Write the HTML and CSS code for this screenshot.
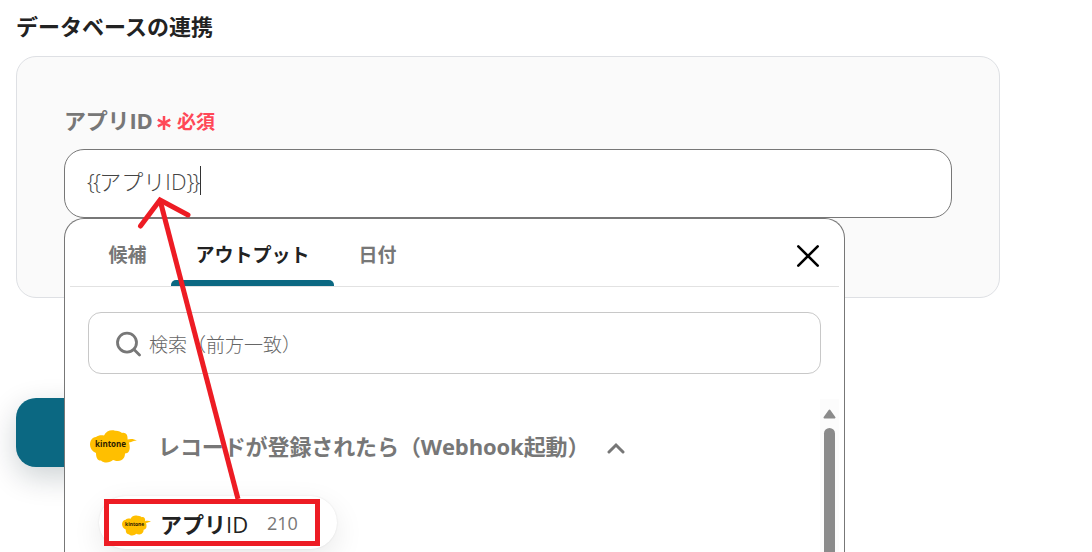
FILE: index.html
```
<!DOCTYPE html>
<html lang="ja">
<head>
  <meta charset="UTF-8" />
  <title>データベースの連携</title>
  <link rel="stylesheet" href="styles.css">
</head>
<body>

  <h2 class="title">データベースの連携</h2>

  <div class="card">
    <div class="label">
      <span class="label-text">アプリID</span>
      <svg class="asterisk" width="14" height="16" viewBox="0 0 14 16"><path d="M7 1v14M.8 4.600l12.400 6.800M13.200 4.600L.8 11.400" /></svg>
      <span class="required">必須</span>
    </div>
    <div class="field">
      <div class="input"><span class="value"><span class="brace">{{</span>アプリID<span class="brace">}}</span></span><span class="caret"></span></div>

      <div class="dropdown">
        <div class="tabs">
          <div class="tab">候補</div>
          <div class="tab active">アウトプット</div>
          <div class="tab">日付</div>
          <svg class="close" width="24" height="24" viewBox="0 0 24 24"><path d="M2.300 2.300l19.400 19.400M21.700 2.300L2.300 21.700" /></svg>
        </div>

        <div class="search">
          <svg width="26" height="26" viewBox="0 0 26 26"><circle cx="12" cy="11.600" r="9.500" /><path d="M19 18.500l5.500 5.500" /></svg>
          <span>検索（前方一致）</span>
        </div>

        <div class="list">
          <div class="items">
            <div class="group">
              <svg class="logo" width="47" height="33" viewBox="0 0 47 33">
                <path d="M6 7C8 5 12 5 14 5.500C16 1 21-.5 25 .8C28 .5 31 2 32 3C36 2 38 5 37.500 9.500C41 8.500 44 9 47 10.500C44 10.500 42 12 39 12.500C40.500 18 40 23 35 23.500C35 27 33 31 28 31C26 31 24.500 30.500 23 30C20 33 14 33.500 11 30.500C8 31 6 28 6 23C-2 20-2 8 6 7Z" />
                <text x="5" y="17.200" textLength="31">kintone</text>
              </svg>
              <span class="group-name">レコードが登録されたら（Webhook起動）</span>
              <svg class="chevron" width="18" height="12" viewBox="0 0 18 12"><path d="M2 10L9 3L16 10" /></svg>
            </div>
            <div class="chip">
              <svg class="logo" width="29" height="21" viewBox="0 0 47 33">
                <path d="M6 7C8 5 12 5 14 5.500C16 1 21-.5 25 .8C28 .5 31 2 32 3C36 2 38 5 37.500 9.500C41 8.500 44 9 47 10.500C44 10.500 42 12 39 12.500C40.500 18 40 23 35 23.500C35 27 33 31 28 31C26 31 24.500 30.500 23 30C20 33 14 33.500 11 30.500C8 31 6 28 6 23C-2 20-2 8 6 7Z" />
                <text x="5" y="17.200" textLength="31">kintone</text>
              </svg>
              <span class="chip-name">アプリ<span class="chip-id">ID</span></span>
              <span class="chip-value">210</span>
            </div>
          </div>
          <div class="scrollbar">
            <svg width="13" height="10" viewBox="0 0 13 10"><path d="M6.500 1.500L11.500 8.500H1.500Z" /></svg>
            <div class="thumb"></div>
          </div>
        </div>
      </div>
    </div>
  </div>

  <div class="button"></div>

  <!-- red arrow and frame over the form -->
  <svg class="marks" width="1092" height="552" viewBox="0 0 1092 552">
    <rect x="106.500" y="501.500" width="211" height="42" />
    <path d="M238 499L160 200" />
    <path d="M140.500 226L160 200L188 215" stroke-linecap="round" />
  </svg>

</body>
</html>
```

FILE: styles.css
```
* {
    box-sizing: border-box;
}
body {
    margin: 0;
    padding: 10px 16px 0;
    height: 552px;
    overflow: hidden;
    position: relative;
    background: #fff;
    color: #777;
    font-family: "Open Sans", "Noto Sans CJK JP", sans-serif;
    font-size: 22px;
}
svg {
    flex: none;
    fill: none;
}
.title {
    margin: 0 0 14px;
    font-size: 22px;
    line-height: 32px;
    color: #222;
}
/* z-index keeps the popup above the button */
.card {
    position: relative;
    z-index: 1;
    width: 984px;
    height: 242px;
    padding: 46px 47px;
    background: #fafafa;
    border: 1px solid #dee0e4;
    border-radius: 20px;
}
.label {
    display: flex;
    align-items: center;
    height: 32px;
    margin-bottom: 14px;
    font-weight: bold;
}
.label-text {
    width: 93px;
    letter-spacing: -0.2px;
    white-space: nowrap;
}
.asterisk {
    margin-top: 7px;
    stroke: #ff4757;
    stroke-width: 2.5;
}
.required {
    margin: 3px 0 0 6px;
    font-size: 19px;
    color: #ff4757;
}
.field {
    position: relative;
    width: 888px;
}
.input {
    display: flex;
    align-items: center;
    height: 69px;
    padding: 0 22px 7px;
    background: #fff;
    border: 1px solid #777;
    border-radius: 20px;
    color: #555;
}
.value {
    font-weight: 300;
    color: #444;
    white-space: nowrap;
}
.brace {
    letter-spacing: -1.6px;
}
.caret {
    width: 1px;
    height: 29px;
    margin-left: 1px;
    background: #333;
}
.dropdown {
    position: absolute;
    top: 69px;
    left: 0;
    width: 781px;
    height: 334px;
    padding: 0 5px;
    background: #fff;
    border: 1px solid #777;
    border-bottom: 0;
    border-radius: 20px 20px 0 0;
}
.tabs {
    display: flex;
    height: 68px;
    padding-left: 14px;
    border-bottom: 1px solid #e2e2e2;
    font-size: 19px;
    font-weight: bold;
}
.tab {
    position: relative;
    padding: 0 24.5px;
    line-height: 72px;
}
.active {
    color: #222;
}
.active::after {
    content: "";
    position: absolute;
    left: 0;
    right: 0;
    bottom: 0;
    height: 6px;
    background: #0b6882;
    border-radius: 5px 5px 0 0;
}
.close {
    margin: 25px 19px 0 auto;
    stroke: #000;
    stroke-width: 2.6;
    stroke-linecap: round;
}
.search {
    display: flex;
    align-items: center;
    gap: 8px;
    height: 62px;
    margin: 25px 18px;
    padding: 1px 26px 0;
    border: 1px solid #c8c8c8;
    border-radius: 13px;
    font-size: 19px;
}
.search span {
    font-weight: 300;
    color: #666;
}
.search svg {
    stroke: #777;
    stroke-width: 2.8;
    stroke-linecap: round;
}
.list {
    display: flex;
    height: 153px;
}
.items {
    flex: 1;
    padding: 30px 0 0 20px;
    overflow: hidden;
}
.group {
    display: flex;
    align-items: center;
    height: 34px;
    font-weight: bold;
}
.logo path {
    fill: #ffbf00;
}
.logo text {
    fill: #2b1a00;
    font-size: 8px;
    font-weight: bold;
}
.group-name {
    margin: -3px 0 0 21px;
    width: 427px;
    letter-spacing: -0.1px;
    white-space: nowrap;
}
.chevron {
    margin: 3px 0 0 22px;
    stroke: #777;
    stroke-width: 3;
    stroke-linecap: round;
}
.chip {
    display: flex;
    align-items: center;
    width: 238px;
    height: 53px;
    margin: 33px 0 0 9px;
    padding-left: 23px;
    border-radius: 27px;
    box-shadow: 0 10px 30px rgba(0, 0, 0, 0.09), 0 0 2px rgba(0, 0, 0, 0.1);
}
.chip .logo {
    margin-top: 5px;
}
.chip-name {
    width: 107px;
    margin-left: 9px;
    color: #222;
    font-weight: bold;
    white-space: nowrap;
}
.chip-id {
    font-weight: 500;
}
.chip-value {
    font-size: 18px;
}
.scrollbar {
    display: flex;
    flex-direction: column;
    align-items: center;
    gap: 9px;
    width: 19px;
    padding-top: 10px;
    background: #fcfcfc;
}
.scrollbar path {
    fill: #8b8b8b;
    stroke: #8b8b8b;
    stroke-width: 2;
    stroke-linejoin: round;
}
.thumb {
    flex: 1;
    width: 11px;
    background: #8b8b8b;
    border-radius: 6px 6px 0 0;
}
.button {
    width: 300px;
    height: 69px;
    margin-top: 100px;
    background: #0b6882;
    border-radius: 20px;
    box-shadow: 0 10px 30px rgba(0, 30, 40, 0.2);
}
.marks {
    position: absolute;
    top: 0;
    left: 0;
    z-index: 2;
    stroke: #ed1c24;
    stroke-width: 5;
}
```
